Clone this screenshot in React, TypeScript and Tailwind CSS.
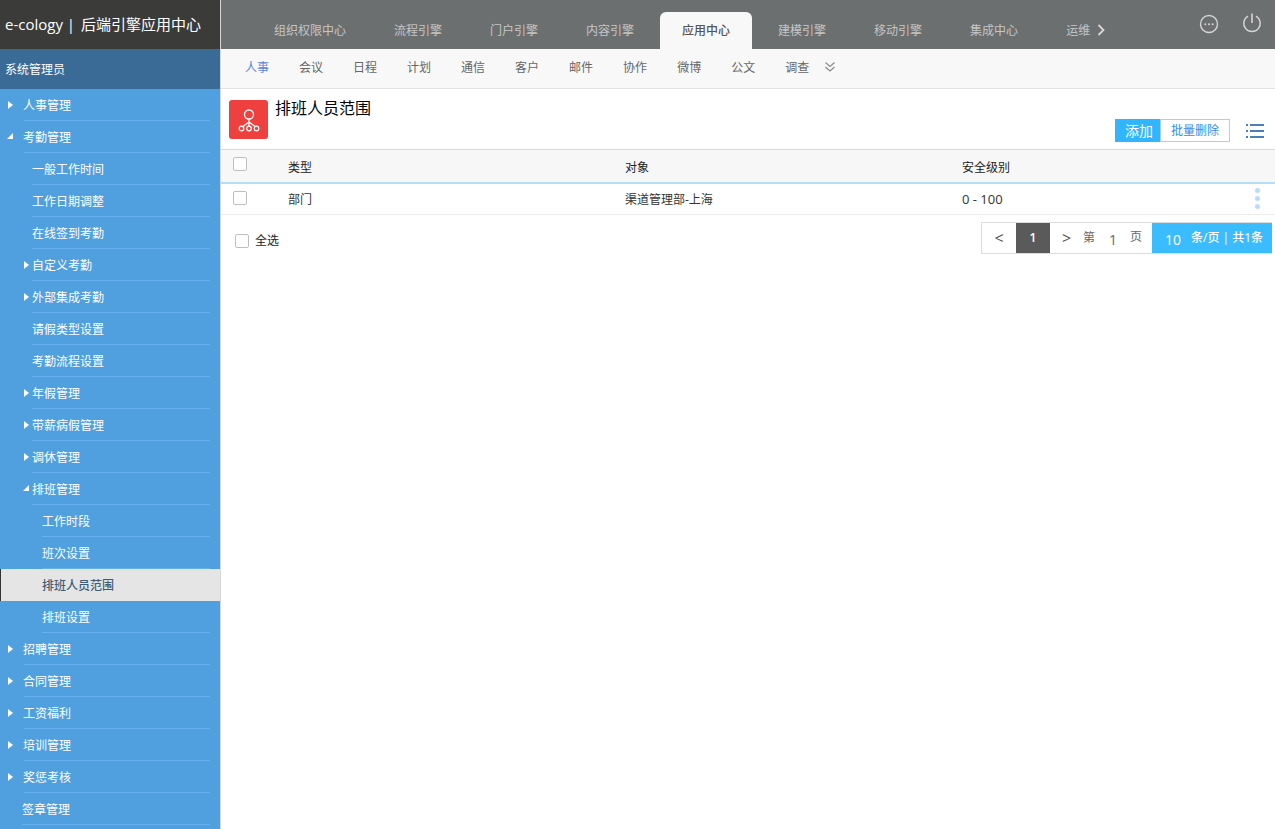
const font = { fontFamily: '"Open Sans", "Noto Sans CJK SC", sans-serif' };

const tabs = ["组织权限中心", "流程引擎", "门户引擎", "内容引擎", "应用中心", "建模引擎", "移动引擎", "集成中心", "运维中心"];
const subNav = ["人事", "会议", "日程", "计划", "通信", "客户", "邮件", "协作", "微博", "公文", "调查"];

type MenuRow = { label: string; pad: string; line: string; arrow?: "right" | "down"; arrowPos?: string; active?: boolean };

const menu: MenuRow[] = [
  { label: "人事管理", pad: "pl-[23px]", line: "ml-[24px]", arrow: "right", arrowPos: "left-[8px]" },
  { label: "考勤管理", pad: "pl-[23px]", line: "ml-[24px]", arrow: "down", arrowPos: "left-[7px]" },
  { label: "一般工作时间", pad: "pl-[32px]", line: "ml-[32px]" },
  { label: "工作日期调整", pad: "pl-[32px]", line: "ml-[32px]" },
  { label: "在线签到考勤", pad: "pl-[32px]", line: "ml-[32px]" },
  { label: "自定义考勤", pad: "pl-[32px]", line: "ml-[32px]", arrow: "right", arrowPos: "left-[24px]" },
  { label: "外部集成考勤", pad: "pl-[32px]", line: "ml-[32px]", arrow: "right", arrowPos: "left-[24px]" },
  { label: "请假类型设置", pad: "pl-[32px]", line: "ml-[32px]" },
  { label: "考勤流程设置", pad: "pl-[32px]", line: "ml-[32px]" },
  { label: "年假管理", pad: "pl-[32px]", line: "ml-[32px]", arrow: "right", arrowPos: "left-[24px]" },
  { label: "带薪病假管理", pad: "pl-[32px]", line: "ml-[32px]", arrow: "right", arrowPos: "left-[24px]" },
  { label: "调休管理", pad: "pl-[32px]", line: "ml-[32px]", arrow: "right", arrowPos: "left-[24px]" },
  { label: "排班管理", pad: "pl-[32px]", line: "ml-[32px]", arrow: "down", arrowPos: "left-[23px]" },
  { label: "工作时段", pad: "pl-[42px]", line: "ml-[42px]" },
  { label: "班次设置", pad: "pl-[42px]", line: "ml-[42px]" },
  { label: "排班人员范围", pad: "pl-[42px]", line: "ml-[42px]", active: true },
  { label: "排班设置", pad: "pl-[42px]", line: "ml-[42px]" },
  { label: "招聘管理", pad: "pl-[23px]", line: "ml-[24px]", arrow: "right", arrowPos: "left-[8px]" },
  { label: "合同管理", pad: "pl-[23px]", line: "ml-[24px]", arrow: "right", arrowPos: "left-[8px]" },
  { label: "工资福利", pad: "pl-[23px]", line: "ml-[24px]", arrow: "right", arrowPos: "left-[8px]" },
  { label: "培训管理", pad: "pl-[23px]", line: "ml-[24px]", arrow: "right", arrowPos: "left-[8px]" },
  { label: "奖惩考核", pad: "pl-[23px]", line: "ml-[24px]", arrow: "right", arrowPos: "left-[8px]" },
  { label: "签章管理", pad: "pl-[22px]", line: "ml-[22px]" },
];

const Arrow = ({ dir }: { dir: "right" | "down" }) =>
  dir === "right" ? (
    <svg width="5" height="8" viewBox="0 0 5 8" className="block">
      <path d="M0 0 L5 4 L0 8 Z" fill="#fff" />
    </svg>
  ) : (
    <svg width="6" height="6" viewBox="0 0 6 6" className="block">
      <path d="M6 0 L6 6 L0 6 Z" fill="#fff" />
    </svg>
  );

const Check = ({ className = "" }: { className?: string }) => (
  <div className={`w-[14px] h-[14px] border border-[#bfbfbf] rounded-[2px] bg-white shrink-0 ${className}`} />
);

const App = () => {
  return (
    <div className="flex w-[1275px] h-[829px] overflow-hidden bg-white text-[12px]" style={font}>
      {/* sidebar */}
      <aside className="w-[220px] shrink-0 flex flex-col bg-[#50a0df] overflow-hidden">
        <div className="h-[49px] shrink-0 bg-[#3b3b39] text-white text-[15px] flex items-center pl-[5px] whitespace-nowrap">
          <span>e-cology |</span>
          <span className="ml-[6px]">后端引擎应用中心</span>
        </div>
        <div className="h-[40px] shrink-0 bg-[#3a6a96] text-white text-[12px] flex items-center pl-[5px] pt-[2px]">
          系统管理员
        </div>
        <div className="flex flex-col">
          {menu.map((row) => (
            <div
              key={row.label}
              className={`relative h-[32px] shrink-0 ${row.active ? "bg-[#e5e5e5] border-l border-[#333]" : ""}`}
            >
              {row.arrow && (
                <span className={`absolute top-[12px] ${row.arrowPos}`}>
                  <Arrow dir={row.arrow} />
                </span>
              )}
              <div
                className={`h-[31px] flex items-center pt-[2px] ${row.active ? "pl-[41px] font-medium text-[#3d5d78]" : `${row.pad} text-white`}`}
              >
                {row.label}
              </div>
              {!row.active && <div className={`h-px mr-[10px] bg-[#64b0ec] ${row.line}`} />}
            </div>
          ))}
        </div>
      </aside>

      {/* main column */}
      <main className="flex-1 min-w-0 flex flex-col border-l border-[#d6d6d6]">
        <header className="h-[49px] shrink-0 bg-[#6c6f70] flex relative">
          <div className="ml-[31px] w-[839px] overflow-hidden flex gap-[4px] items-end">
            {tabs.map((t) => (
              <div
                key={t}
                className={`h-[37px] px-[22px] flex items-center justify-center shrink-0 whitespace-nowrap rounded-t-[6px] pt-[1px] ${
                  t === "应用中心" ? "bg-[#f8f8f8] text-[#555] font-medium" : "text-[#c4c6c6]"
                }`}
              >
                {t}
              </div>
            ))}
          </div>
          <svg width="8" height="12" viewBox="0 0 8 12" className="ml-[6px] mt-[24px]">
            <path d="M1.5 1 L6.5 6 L1.5 11" fill="none" stroke="#d8d8d8" strokeWidth="1.8" />
          </svg>
          <div className="ml-auto flex items-start gap-[23px] pt-[14px] pr-[13px]">
            <svg width="20" height="20" viewBox="0 0 20 20">
              <circle cx="10" cy="10" r="8.5" fill="none" stroke="#d4d4d4" strokeWidth="1.4" />
              <circle cx="6.3" cy="10.3" r="1" fill="#d4d4d4" />
              <circle cx="10" cy="10.3" r="1" fill="#d4d4d4" />
              <circle cx="13.7" cy="10.3" r="1" fill="#d4d4d4" />
            </svg>
            <svg width="20" height="20" viewBox="0 0 20 20" className="-mt-[1px]">
              <path d="M6 3.2 A8.2 8.2 0 1 0 14 3.2" fill="none" stroke="#d4d4d4" strokeWidth="1.4" />
              <path d="M10 0.5 V10" stroke="#d4d4d4" strokeWidth="1.6" />
            </svg>
          </div>
        </header>

        <nav className="h-[40px] shrink-0 bg-[#f8f8f8] border-b border-[#e2e2e2] flex items-center pl-[24px] gap-[30px] relative text-[#666] pb-[1px]">
          {subNav.map((s, i) => (
            <span key={s} className={i === 0 ? "text-[#5b84d8]" : ""}>
              {s}
            </span>
          ))}
          <svg width="10" height="10" viewBox="0 0 10 10" className="-ml-[14px] -mt-[2px]">
            <path d="M0.5 0.5 L5 4.5 L9.5 0.5 M0.5 5 L5 9 L9.5 5" fill="none" stroke="#888" strokeWidth="1.1" />
          </svg>
        </nav>

        {/* title row */}
        <div className="h-[60px] shrink-0 flex pl-[8px] pt-[11px] relative">
          <div className="w-[39px] h-[39px] bg-[#ef4040] rounded-[3px] flex items-center justify-center">
            <svg width="22" height="24" viewBox="0 0 22 24">
              <circle cx="11" cy="6.5" r="4.5" fill="none" stroke="#fff" strokeWidth="1.3" />
              <path d="M11 11 V18 M11 14 L5 18.5 M11 14 L17 18.5" fill="none" stroke="#fff" strokeWidth="1.2" />
              <circle cx="3.5" cy="20.5" r="2.3" fill="none" stroke="#fff" strokeWidth="1.2" />
              <circle cx="11" cy="20.5" r="2.3" fill="none" stroke="#fff" strokeWidth="1.2" />
              <circle cx="18.5" cy="20.5" r="2.3" fill="none" stroke="#fff" strokeWidth="1.2" />
            </svg>
          </div>
          <div className="ml-[7px] -mt-[1px] text-[16px] leading-[18px] text-black">排班人员范围</div>
          <div className="ml-auto flex items-start mt-[19px] mr-[11px]">
            <div className="w-[45px] h-[23px] bg-[#32b5ff] text-white text-[14px] flex items-center justify-center pl-[3px]">
              添加
            </div>
            <div className="w-[70px] h-[23px] bg-white border border-[#a9cdf3] text-[#2e8cf0] flex items-center justify-center">
              批量删除
            </div>
            <svg width="18" height="14" viewBox="0 0 18 14" className="ml-[16px] mt-[5px]">
              <path d="M0 1 H2 M4 1 H18 M0 7 H2 M4 7 H18 M0 13 H2 M4 13 H18" stroke="#4a7fbd" strokeWidth="2" />
            </svg>
          </div>
        </div>

        {/* table */}
        <div className="grid grid-cols-[67px_337px_337px_1fr] items-center h-[35px] shrink-0 bg-[#f7f7f7] border-t border-[#d9d9d9] border-b-2 border-b-[#b3dcf7] text-[#222] pt-[3px]">
          <Check className="ml-[12px] -mt-[7px]" />
          <div>类型</div>
          <div>对象</div>
          <div>安全级别</div>
        </div>
        <div className="relative grid grid-cols-[67px_337px_337px_1fr] items-center h-[31px] shrink-0 border-b border-[#ececec] text-[#333] pt-[2px]">
          <Check className="ml-[12px] -mt-[5px]" />
          <div>部门</div>
          <div>渠道管理部-上海</div>
          <div className="text-[13px]">0 - 100</div>
          <div className="absolute right-[15px] top-[4px] flex flex-col gap-[3px]">
            <span className="w-[5px] h-[5px] rounded-full bg-[#b9dcfb]" />
            <span className="w-[5px] h-[5px] rounded-full bg-[#b9dcfb]" />
            <span className="w-[5px] h-[5px] rounded-full bg-[#b9dcfb]" />
          </div>
        </div>

        {/* footer */}
        <div className="flex items-start pt-[7px] pl-[14px] pr-[3px]">
          <div className="flex items-center gap-[6px] mt-[10px] text-[#222]">
            <Check />
            <span>全选</span>
          </div>
          <div className="ml-auto flex h-[32px] border border-[#dcdcdc] text-[#666] bg-white">
            <div className="w-[34px] flex items-center justify-center text-[16px] text-[#555]">&lt;</div>
            <div className="w-[34px] bg-[#5a5a5a] text-white font-semibold flex items-center justify-center">1</div>
            <div className="w-[33px] flex items-center justify-center text-[16px] text-[#555]">&gt;</div>
            <div className="w-[13px]">
              <div className="h-full flex items-center">第</div>
            </div>
            <div className="w-[34px] flex items-center justify-center text-[14px] pt-[2px]">1</div>
            <div className="w-[22px] flex items-center pb-[2px]">页</div>
            <div className="w-[120px] bg-[#3bbcff] text-white flex items-center pl-[13px] mr-[-1px]">
              <span className="text-[14px] w-[26px] pt-[2px]">10</span>
              <span className="font-medium whitespace-nowrap">条/页 | 共1条</span>
            </div>
          </div>
        </div>
      </main>
    </div>
  );
};

export default App;
